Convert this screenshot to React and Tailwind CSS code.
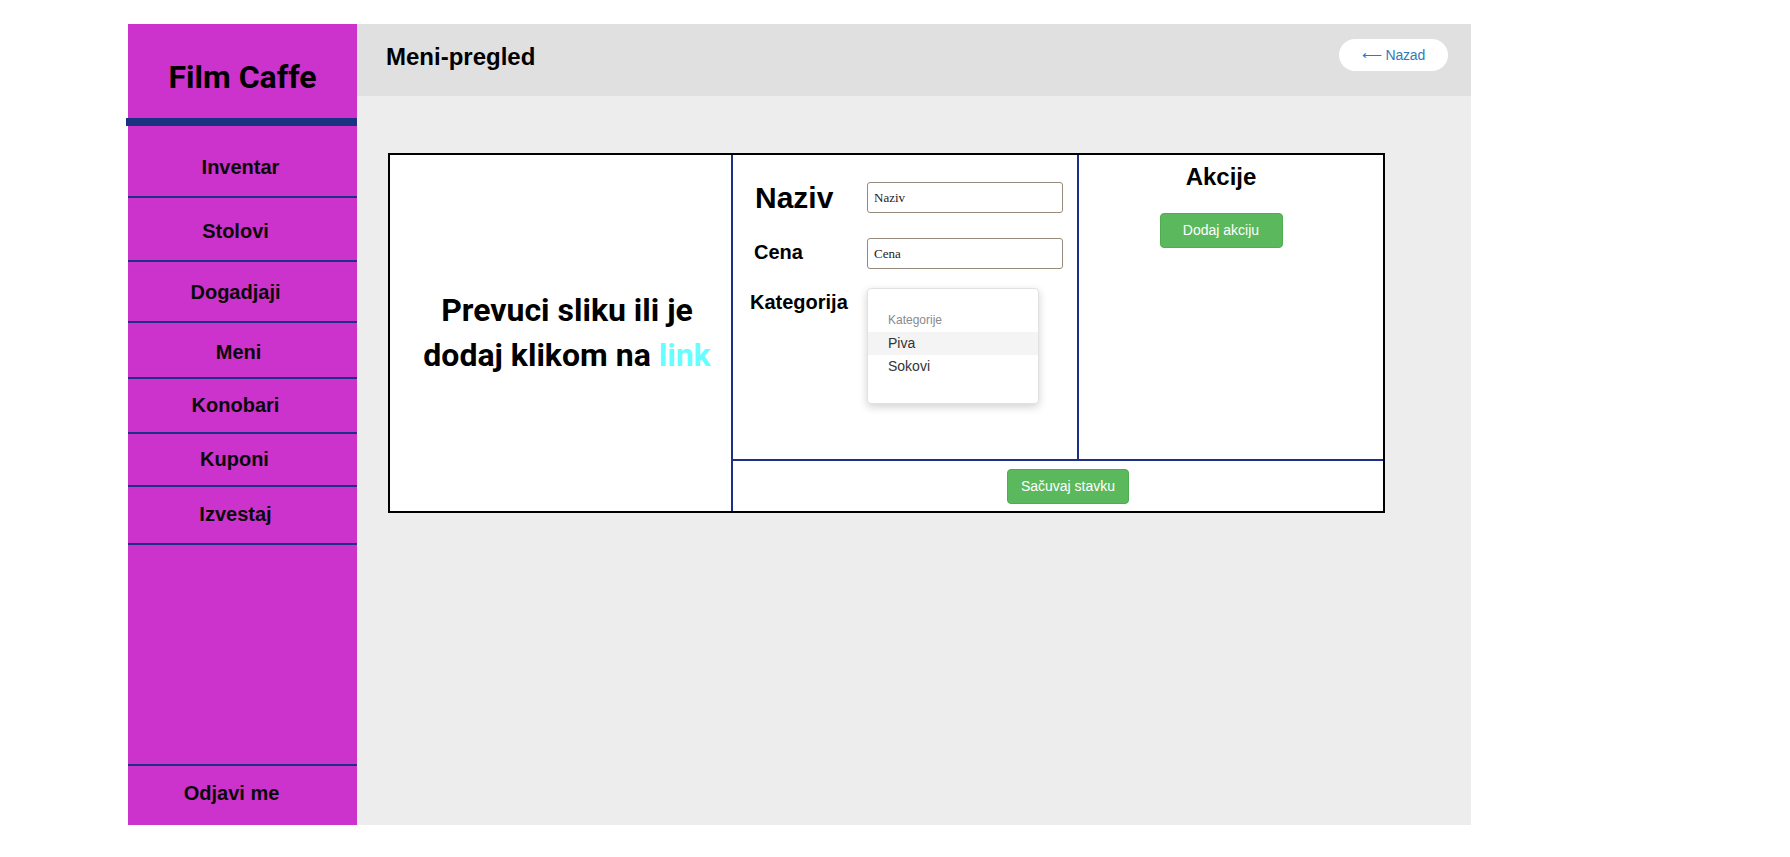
import React from 'react';

const navItems = [
  { label: 'Inventar', cls: 'h-[72px] pt-[29px] pr-[4px]' },
  { label: 'Stolovi', cls: 'h-[64px] pt-[21px] pr-[14px]' },
  { label: 'Dogadjaji', cls: 'h-[61px] pt-[18px] pr-[14px]' },
  { label: 'Meni', cls: 'h-[56px] pt-[17px] pr-[8px]' },
  { label: 'Konobari', cls: 'h-[55px] pt-[14px] pr-[14px]' },
  { label: 'Kuponi', cls: 'h-[53px] pt-[13px] pr-[16px]' },
  { label: 'Izvestaj', cls: 'h-[58px] pt-[15px] pr-[14px]' },
];

const kategorije = ['Piva', 'Sokovi'];

function Sidebar() {
  return (
    <aside className="w-[229px] shrink-0 bg-[#cc33cc] flex flex-col font-['Liberation_Sans',Arial,sans-serif]">
      <div className="h-[94px] pt-[34px] text-center">
        <h1 className="font-['Roboto',sans-serif] font-bold text-[32px] leading-[38px] text-black">Film Caffe</h1>
      </div>
      <div className="h-[8px] w-[232px] -ml-[2px] bg-[#1b3282]" />

      <ul>
        {navItems.map((item) => (
          <li
            key={item.label}
            className={`${item.cls} border-b-2 border-[#1e2f86] text-center text-[20px] leading-[24px] font-bold text-[#0a0a0a]`}
          >
            {item.label}
          </li>
        ))}
      </ul>

      <div className="flex-1" />

      <div className="h-[61px] pt-[15px] pr-[22px] border-t-2 border-[#1e2f86] text-center text-[20px] leading-[24px] font-bold text-[#0a0a0a]">
        Odjavi me
      </div>
    </aside>
  );
}

function Header() {
  return (
    <div className="h-[72px] bg-[#e0e0e0] flex items-start justify-between pl-[29px] pr-[23px]">
      <h2 className="pt-[19px] font-['Liberation_Sans',Arial,sans-serif] font-bold text-[24px] leading-[28px] text-black">
        Meni-pregled
      </h2>
      <button className="mt-[15px] w-[109px] h-[32px] rounded-full bg-white text-[#337ab7] text-[14px] font-['Liberation_Sans',Arial,sans-serif] tracking-[-0.2px]">
        ⟵ Nazad
      </button>
    </div>
  );
}

function Field({ label, labelCls, placeholder, rowCls }) {
  return (
    <div className={`flex items-center ${rowCls}`}>
      <div className={`w-[114px] ${labelCls}`}>{label}</div>
      <input
        placeholder={placeholder}
        className="w-[196px] h-[31px] border border-[#958a7c] rounded-[3px] bg-white px-[6px] text-[13px] font-['Liberation_Serif','Times_New_Roman',serif] placeholder:text-[#222] outline-none"
      />
    </div>
  );
}

function ItemCard() {
  return (
    <div className="w-[997px] h-[360px] border-2 border-black bg-white grid grid-cols-[343px_346px_1fr] grid-rows-[304px_1fr]">
      <div className="row-span-2 border-r-2 border-[#1e2f86] flex items-center justify-center pl-[13px]">
        <p className="font-['Roboto',sans-serif] font-bold text-[32px] leading-[45px] text-center text-black">
          Prevuci sliku ili je
          <br />
          dodaj klikom na <span className="text-[#66ffff]">link</span>
        </p>
      </div>

      <div className="border-r-2 border-[#1e2f86] pl-[20px] font-['Liberation_Sans',Arial,sans-serif] text-black">
        <Field
          label="Naziv"
          placeholder="Naziv"
          rowCls="mt-[27px] h-[31px]"
          labelCls="pl-[2px] font-bold text-[30px] leading-[34px]"
        />
        <Field
          label="Cena"
          placeholder="Cena"
          rowCls="mt-[25px] h-[31px]"
          labelCls="pl-[1px] pb-[4px] font-bold text-[20px] leading-[24px]"
        />
        <div className="mt-[19px] flex items-start">
          <div className="w-[114px] -ml-[3px] mr-[3px] mt-[2px] font-bold text-[20px] leading-[24px]">Kategorija</div>
          <div className="w-[172px] h-[116px] bg-white border border-[#e2e2e2] rounded-[4px] shadow-[0_3px_8px_rgba(0,0,0,0.18)] pt-[19px]">
            <div className="h-[24px] pl-[20px] flex items-center text-[12px] text-[#8a8a8a]">Kategorije</div>
            {kategorije.map((k, i) => (
              <div
                key={k}
                className={`h-[23px] pl-[20px] flex items-center text-[14px] text-[#333] ${i === 0 ? 'bg-[#f4f4f4]' : ''}`}
              >
                {k}
              </div>
            ))}
          </div>
        </div>
      </div>

      <div className="flex flex-col items-center pr-[20px] pt-[8px]">
        <h3 className="font-['Liberation_Sans',Arial,sans-serif] font-bold text-[24px] leading-[28px] text-black">Akcije</h3>
        <button className="mt-[22px] w-[123px] h-[35px] rounded-[4px] bg-[#5cb85c] border border-[#4cae4c] text-white text-[14px] font-['Liberation_Sans',Arial,sans-serif]">
          Dodaj akciju
        </button>
      </div>

      <div className="col-span-2 border-t-2 border-[#1e2f86] flex items-center justify-center pl-[20px]">
        <button className="w-[122px] h-[35px] rounded-[4px] bg-[#5cb85c] border border-[#4cae4c] text-white text-[14px] font-['Liberation_Sans',Arial,sans-serif]">
          Sačuvaj stavku
        </button>
      </div>
    </div>
  );
}

export default function App() {
  return (
    <div className="min-h-[857px] bg-white pt-[24px] pl-[128px]">
      <div className="flex w-[1343px] h-[801px]">
        <Sidebar />
        <main className="flex-1 bg-[#ededed] flex flex-col">
          <Header />
          <div className="pl-[31px] pt-[57px]">
            <ItemCard />
          </div>
        </main>
      </div>
    </div>
  );
}
